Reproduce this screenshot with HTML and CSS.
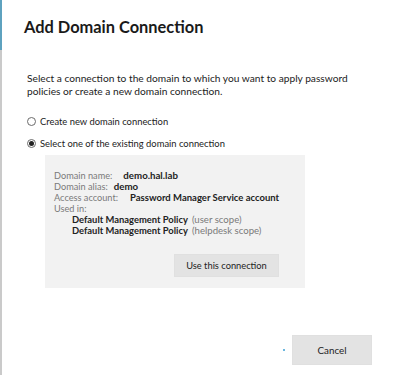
FILE: index.html
```html
<!DOCTYPE html>
<html>
<head>
<meta charset="utf-8">
<link rel="stylesheet" href="styles.css">
</head>
<body>
<div class="frame">
  <div class="edge"></div>
  <div class="dialog">
    <h1 class="title">Add Domain Connection</h1>
    <p class="intro">Select a connection to the domain to which you want to apply password policies or create a new domain connection.</p>
    <div class="options">
      <label class="option"><span class="radio"></span><span>Create new domain connection</span></label>
      <label class="option"><span class="radio checked"></span><span>Select one of the existing domain connection</span></label>
    </div>
    <div class="conn-card">
      <div class="row"><span class="label">Domain name:</span><span class="value v-name">demo.hal.lab</span></div>
      <div class="row"><span class="label">Domain alias:</span><span class="value v-alias">demo</span></div>
      <div class="row"><span class="label">Access account:</span><span class="value v-account">Password Manager Service account</span></div>
      <div class="row"><span class="label">Used in:</span></div>
      <div class="row policy"><span class="value">Default Management Policy</span> <span class="label scope">(user scope)</span></div>
      <div class="row policy"><span class="value">Default Management Policy</span> <span class="label scope">(helpdesk scope)</span></div>
      <div class="card-actions"><button class="btn use-btn">Use this connection</button></div>
    </div>
    <div class="footer">
      <span class="dot"></span>
      <button class="btn cancel-btn">Cancel</button>
    </div>
  </div>
</div>
</body>
</html>
```
FILE: styles.css
```css
html, body {
  margin: 0;
  padding: 0;
  background: #fff;
}
body {
  font-family: Lato, "Liberation Sans", sans-serif;
  color: #222;
}
.frame {
  display: flex;
  min-height: 375px;
}
.edge {
  width: 2px;
  flex: 0 0 2px;
  background: linear-gradient(to bottom, #5ea2bf 0, #5ea2bf 50px, #cacaca 50px, #cacaca 100%);
}
.dialog {
  flex: 1;
  padding-left: 22px;
}
.title {
  margin: 17px 0 0 0;
  font-size: 16.4px;
  line-height: 20px;
  font-weight: 700;
  color: #1a1a1a;
}
.intro {
  margin: 35px 0 0 3px;
  font-size: 10.2px;
  line-height: 13px;
  color: #222;
  width: 340px;
}
.options {
  margin-top: 15px;
  margin-left: 3px;
  display: flex;
  flex-direction: column;
  gap: 6px;
}
.option {
  display: flex;
  align-items: center;
  gap: 4px;
  height: 16px;
  font-size: 9.4px;
  color: #222;
}
.radio {
  width: 9px;
  height: 9px;
  border: 1px solid #6b6b6b;
  border-radius: 50%;
  box-sizing: border-box;
  display: inline-flex;
  align-items: center;
  justify-content: center;
  background: #fff;
}
.radio.checked::after {
  content: "";
  width: 5px;
  height: 5px;
  border-radius: 50%;
  background: #222;
}
.conn-card {
  margin: 4px 0 0 21px;
  width: 260px;
  box-sizing: border-box;
  background: #f2f2f2;
  padding: 12px 9px 11px 9px;
  line-height: 11px;
}
.row {
  white-space: nowrap;
  height: 11px;
  line-height: 11px;
}
.label {
  color: #7a7a7a;
  font-size: 9.2px;
}
.scope {
  font-size: 9.6px;
}
.value {
  font-weight: 700;
  color: #222;
  font-size: 9.4px;
}
.v-name { margin-left: 11px; font-size: 9.7px; }
.v-alias { margin-left: 6px; font-size: 9.7px; }
.v-account { margin-left: 12px; font-size: 9.5px; }
.policy {
  padding-left: 18px;
}
.card-actions {
  display: flex;
  justify-content: flex-end;
  padding-right: 17px;
  margin-top: 21px;
}
.btn {
  font-family: Lato, "Liberation Sans", sans-serif;
  border: 1px solid #e0e0e0;
  background: #e3e3e3;
  color: #222;
  cursor: pointer;
  padding: 0;
  white-space: nowrap;
}
.use-btn {
  width: 105px;
  height: 23px;
  font-size: 9.3px;
}
.footer {
  display: flex;
  justify-content: flex-end;
  align-items: center;
  gap: 7px;
  margin-top: 47px;
  padding-right: 22px;
}
.dot {
  width: 2px;
  height: 2px;
  background: #3b9fd4;
  border-radius: 50%;
}
.cancel-btn {
  width: 80px;
  height: 30px;
  font-size: 9.8px;
}
```
